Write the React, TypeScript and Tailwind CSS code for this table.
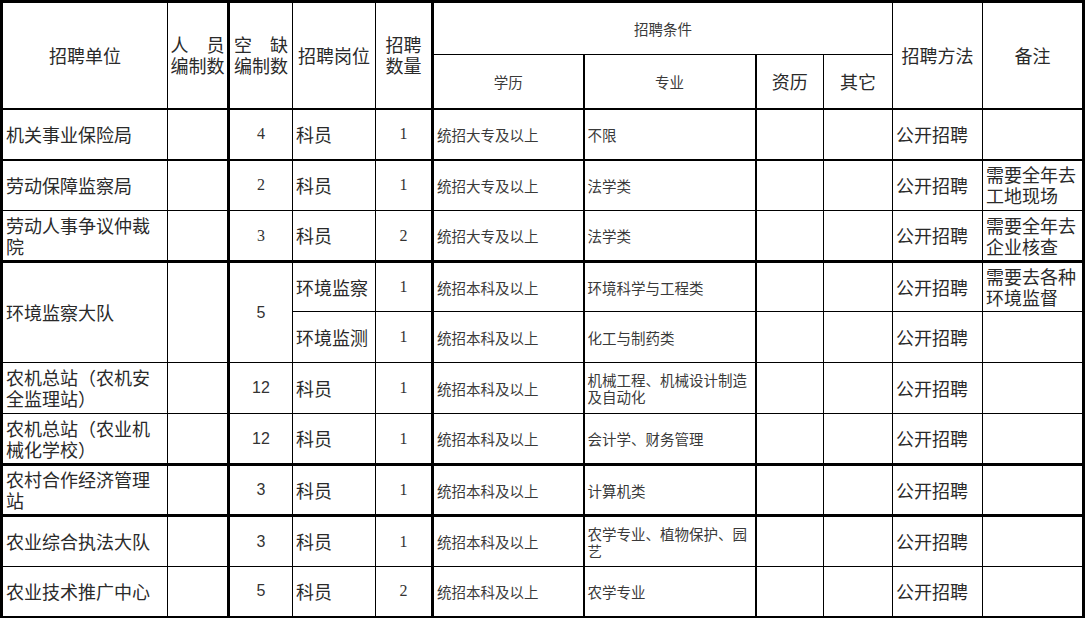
import React from 'react';

const big = "font-['Noto_Sans_CJK_SC',sans-serif] text-[18px] leading-[21px] text-[#2a2a2a]";
const small = "font-['Noto_Sans_CJK_SC',sans-serif] text-[14.5px] leading-[17px] text-[#3a3a3a]";
const serifNum = "font-['Liberation_Serif',serif] text-[16px] text-[#333] text-center";
const sansNum = "font-['Liberation_Sans',sans-serif] text-[16px] text-[#333] text-center";

const td = 'border border-black p-0 px-[3px] align-middle';
const th = 'border border-black p-0 align-middle text-center';

interface RowData {
  unit: string;
  cap: string;
  capSerif?: boolean;
  num: string;
  edu: string;
  major: string;
  note?: string;
  top: string;
  h?: string;
}

const rows: RowData[] = [
  { unit: '机关事业保险局', cap: '4', capSerif: true, num: '1', edu: '统招大专及以上', major: '不限', top: 'border-t-2' },
  { unit: '劳动保障监察局', cap: '2', capSerif: true, num: '1', edu: '统招大专及以上', major: '法学类', note: '需要全年去工地现场', top: 'border-t-2' },
  { unit: '劳动人事争议仲裁院', cap: '3', capSerif: true, num: '2', edu: '统招大专及以上', major: '法学类', note: '需要全年去企业核查', top: '' },
];

const rowsAfter: RowData[] = [
  { unit: '农机总站（农机安全监理站）', cap: '12', num: '1', edu: '统招本科及以上', major: '机械工程、机械设计制造及自动化', top: '' },
  { unit: '农机总站（农业机械化学校）', cap: '12', num: '1', edu: '统招本科及以上', major: '会计学、财务管理', top: '' },
  { unit: '农村合作经济管理站', cap: '3', num: '1', edu: '统招本科及以上', major: '计算机类', top: 'border-t-[3px]' },
  { unit: '农业综合执法大队', cap: '3', num: '1', edu: '统招本科及以上', major: '农学专业、植物保护、园艺', top: 'border-t-[3px]' },
  { unit: '农业技术推广中心', cap: '5', num: '2', edu: '统招本科及以上', major: '农学专业', top: 'border-b-2', h: 'h-[50px]' },
];

function DataRow({ r }: { r: RowData }) {
  return (
    <tr className={r.h ?? 'h-[51px]'}>
      <td className={`${td} ${r.top} border-l-[3px] ${big}`}>{r.unit}</td>
      <td className={`${td} ${r.top}`}></td>
      <td className={`${td} ${r.top} border-l-[3px] ${r.capSerif ? serifNum : sansNum}`}>{r.cap}</td>
      <td className={`${td} ${r.top} ${big}`}>科员</td>
      <td className={`${td} ${r.top} ${serifNum}`}>{r.num}</td>
      <td className={`${td} ${r.top} border-l-[3px] ${small}`}>{r.edu}</td>
      <td className={`${td} ${r.top} border-l-2 ${small}`}>{r.major}</td>
      <td className={`${td} ${r.top} border-l-2`}></td>
      <td className={`${td} ${r.top}`}></td>
      <td className={`${td} ${r.top} ${big}`}>公开招聘</td>
      <td className={`${td} ${r.top} border-r-[3px] ${big}`}>{r.note}</td>
    </tr>
  );
}

export default function App() {
  return (
    <div className="w-[1087px] h-[620px] bg-white overflow-hidden">
      <table className="table-fixed border-collapse w-[1085px]">
        <colgroup>
          <col className="w-[166px]" />
          <col className="w-[61px]" />
          <col className="w-[64px]" />
          <col className="w-[83px]" />
          <col className="w-[57px]" />
          <col className="w-[151px]" />
          <col className="w-[172px]" />
          <col className="w-[68px]" />
          <col className="w-[69px]" />
          <col className="w-[90px]" />
          <col className="w-[101px]" />
        </colgroup>
        <tbody>
          {/* Header */}
          <tr className="h-[53px]">
            <td rowSpan={2} className={`${th} border-t-[3px] border-l-[3px] ${big}`}>招聘单位</td>
            <td rowSpan={2} className={`${th} border-t-[3px] ${big}`}>
              <span className="inline-block w-[55px]">人　员编制数</span>
            </td>
            <td rowSpan={2} className={`${th} border-t-[3px] border-l-[3px] ${big}`}>
              <span className="inline-block w-[55px]">空　缺编制数</span>
            </td>
            <td rowSpan={2} className={`${th} border-t-[3px] ${big}`}>招聘岗位</td>
            <td rowSpan={2} className={`${th} border-t-[3px] ${big}`}>
              <span className="inline-block w-[37px]">招聘数量</span>
            </td>
            <td colSpan={4} className={`${th} border-t-[3px] border-l-[3px] ${small}`}>招聘条件</td>
            <td rowSpan={2} className={`${th} border-t-[3px] ${big}`}>招聘方法</td>
            <td rowSpan={2} className={`${th} border-t-[3px] border-r-[3px] ${big}`}>备注</td>
          </tr>
          <tr className="h-[54px]">
            <td className={`${th} border-l-[3px] ${small}`}>学历</td>
            <td className={`${th} border-l-2 ${small}`}>专业</td>
            <td className={`${th} border-l-2 ${big}`}>资历</td>
            <td className={`${th} ${big}`}>其它</td>
          </tr>

          {rows.map((r) => <DataRow key={r.unit} r={r} />)}

          {/* 环境监察大队: two posts */}
          <tr className="h-[50px]">
            <td rowSpan={2} className={`${td} border-t-[3px] border-l-[3px] ${big}`}>环境监察大队</td>
            <td rowSpan={2} className={`${td} border-t-[3px]`}></td>
            <td rowSpan={2} className={`${td} border-t-[3px] border-l-[3px] ${sansNum}`}>5</td>
            <td className={`${td} border-t-[3px] ${big}`}>环境监察</td>
            <td className={`${td} border-t-[3px] ${serifNum}`}>1</td>
            <td className={`${td} border-t-[3px] border-l-[3px] ${small}`}>统招本科及以上</td>
            <td className={`${td} border-t-[3px] border-l-2 ${small}`}>环境科学与工程类</td>
            <td className={`${td} border-t-[3px] border-l-2`}></td>
            <td className={`${td} border-t-[3px]`}></td>
            <td className={`${td} border-t-[3px] ${big}`}>公开招聘</td>
            <td className={`${td} border-t-[3px] border-r-[3px] ${big}`}>需要去各种环境监督</td>
          </tr>
          <tr className="h-[51px]">
            <td className={`${td} ${big}`}>环境监测</td>
            <td className={`${td} ${serifNum}`}>1</td>
            <td className={`${td} border-l-[3px] ${small}`}>统招本科及以上</td>
            <td className={`${td} border-l-2 ${small}`}>化工与制药类</td>
            <td className={`${td} border-l-2`}></td>
            <td className={td}></td>
            <td className={`${td} ${big}`}>公开招聘</td>
            <td className={`${td} border-r-[3px]`}></td>
          </tr>

          {rowsAfter.map((r) => <DataRow key={r.unit} r={r} />)}
        </tbody>
      </table>
    </div>
  );
}
